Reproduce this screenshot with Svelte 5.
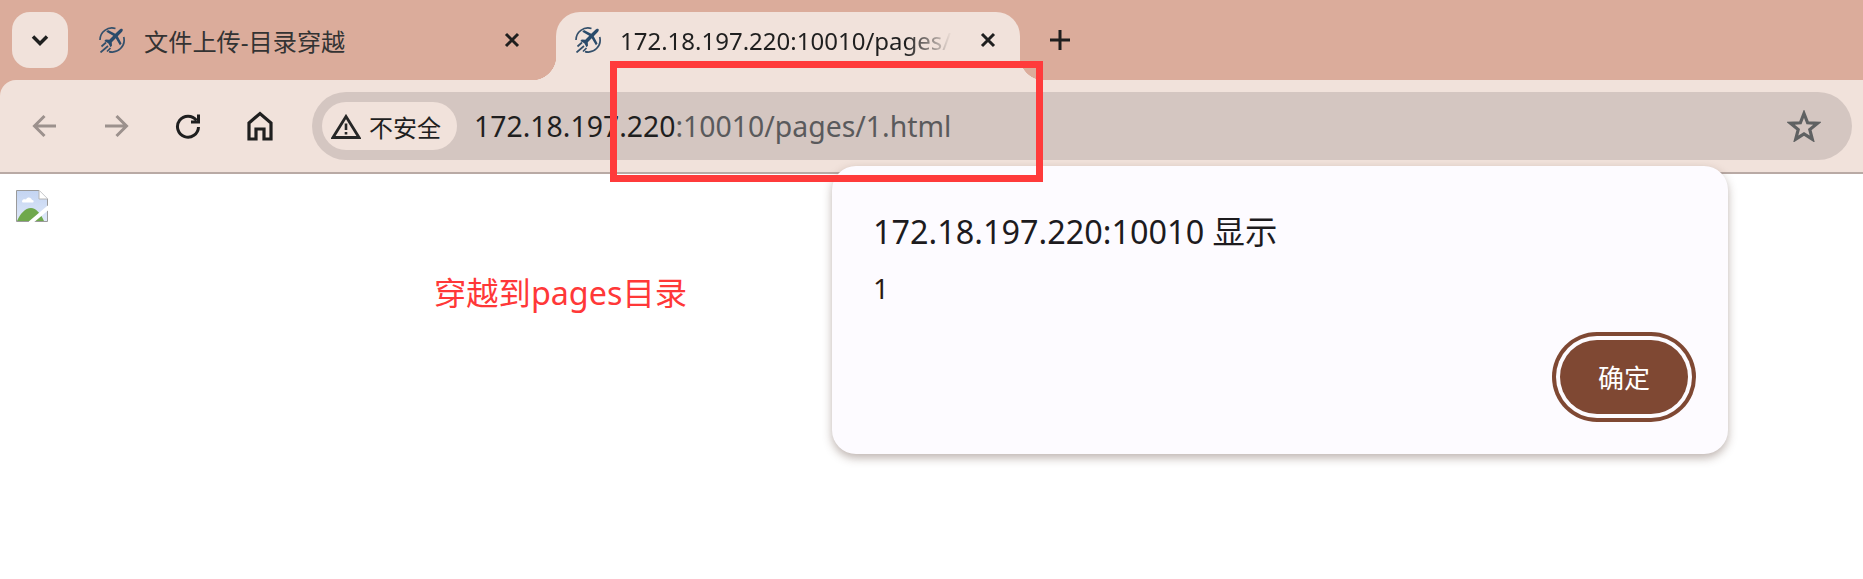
<script lang="ts">
  const host = '172.18.197.220';
  const rest = ':10010/pages/1.html';
</script>

{#snippet favicon()}
  <svg class="favicon" viewBox="0 0 28 26" aria-hidden="true">
    <path class="fav-ring" d="M2 13A12 12 0 0 1 17.500 1.500M25.700 10A12 12 0 0 1 11 24.600" />
    <path class="fav-speed" d="M8 15.500 3.500 19.500M10 19 2.500 25.500M12.500 21 9 24.500" />
    <path
      class="fav-plane"
      transform="translate(16.500 10) rotate(45) scale(.8)"
      d="M0-14C1.600-14 2.200-12 2.200-9.500V-3.500L12-.5V2.500L2.200 0V7L5.500 10V12.500L0 11-5.500 12.500V10L-2.200 7V0L-12 2.500V-.5L-2.200-3.500V-9.500C-2.200-12-1.600-14 0-14Z"
    />
  </svg>
{/snippet}

{#snippet closeIcon()}
  <svg class="close" viewBox="0 0 16 16" aria-hidden="true">
    <path d="M2 2 14 14M14 2 2 14" />
  </svg>
{/snippet}

<div class="browser">
  <div class="chrome">
    <div class="tabstrip">
      <button class="tab-search" aria-label="搜索标签页">
        <svg viewBox="0 0 18 12" aria-hidden="true"><path d="M2 2.500 9 9.500 16 2.500" /></svg>
      </button>
      <div class="tab">
        {@render favicon()}
        <span class="tab-title">文件上传-目录穿越</span>
        {@render closeIcon()}
      </div>
      <div class="tab active">
        {@render favicon()}
        <span class="tab-title fade">{host}{rest}</span>
        {@render closeIcon()}
      </div>
      <button class="new-tab" aria-label="新建标签页">
        <svg viewBox="0 0 22 22" aria-hidden="true"><path d="M11 1V21M1 11H21" /></svg>
      </button>
    </div>

    <div class="toolbar">
      <button class="nav dim" aria-label="后退">
        <svg class="back" viewBox="0 0 26 26" aria-hidden="true"><path d="M24 13H3M12.500 3 2.500 13 12.500 23" /></svg>
      </button>
      <button class="nav dim" aria-label="前进">
        <svg viewBox="0 0 26 26" aria-hidden="true"><path d="M2 13H23M13.500 3 23.500 13 13.500 23" /></svg>
      </button>
      <button class="nav" aria-label="重新加载">
        <svg class="reload" viewBox="0 0 26 26" aria-hidden="true">
          <path d="M21.500 7.500A10.500 10.500 0 1 0 23.500 14" />
          <path d="M23.500 1.500V9H16" />
        </svg>
      </button>
      <button class="nav" aria-label="主页">
        <svg class="home" viewBox="0 0 26 30" aria-hidden="true">
          <path d="M2 28V12L13 2.500 24 12V28H17V18H9V28Z" />
        </svg>
      </button>

      <div class="omnibox">
        <div class="chip">
          <svg class="warn" viewBox="0 0 30 25" aria-hidden="true">
            <path class="warn-outline" d="M15 2.500 28 23.500H2Z" />
            <path class="warn-mark" d="M15 9.500V16M15 18V20.500" />
          </svg>
          <span>不安全</span>
        </div>
        <div class="url"><span class="host">{host}</span><span class="path">{rest}</span></div>
        <svg class="star" viewBox="0 0 34 32" aria-hidden="true">
          <path d="M17 3.500 20.600 12.800 30.500 13.300 22.800 19.600 25.300 29.200 17 23.800 8.700 29.200 11.200 19.600 3.500 13.300 13.400 12.800Z" />
        </svg>
      </div>
    </div>
  </div>

  <div class="page">
    <svg class="broken" viewBox="0 0 32 32" aria-label="图片加载失败">
      <defs>
        <linearGradient id="sky" x1="0" y1="0" x2="0" y2="1">
          <stop offset="0" stop-color="#c3d4f2" />
          <stop offset="1" stop-color="#dfe8f8" />
        </linearGradient>
      </defs>
      <path d="M.5.5H23L31.500 9V31.500H.5Z" fill="url(#sky)" stroke="#9a9a9a" />
      <path d="M23 .5V9H31.500" fill="#fff" stroke="#b5b5b5" />
      <path d="M6 11.500C6 9 9 9 10 9.500 11.500 6.500 15 7 16 10 18 10 18 12 17 12.500H7C6.500 12.500 6 12 6 11.500Z" fill="#fff" />
      <path d="M1 31C4 24 9 18 15 18 20 18 25 24 28 31Z" fill="#6fa84c" />
      <path d="M14 33 33 17" stroke="#fff" stroke-width="4" fill="none" />
    </svg>

    <span class="note">穿越到pages目录</span>
  </div>

  <div class="callout"></div>

  <div class="dialog" role="alertdialog">
    <div class="dialog-title">172.18.197.220:10010 显示</div>
    <div class="dialog-body">1</div>
    <div class="dialog-actions">
      <button class="ok">确定</button>
    </div>
  </div>
</div>

<style>
  :global(body) {
    background: #fff;
  }

  .browser {
    position: relative;
    height: 579px;
    overflow: hidden;
    font-family: "Noto Sans", "Noto Sans CJK SC", sans-serif;
    color: #1f1f1f;
  }

  button {
    padding: 0;
    border: 0;
    background: none;
    font: inherit;
    display: flex;
    align-items: center;
    justify-content: center;
  }

  .chrome {
    background: #dbac9b;
  }

  /* tab strip */
  .tabstrip {
    display: flex;
    gap: 12px;
    height: 80px;
    padding-left: 12px;
  }
  .tab-search {
    width: 56px;
    height: 56px;
    margin-top: 12px;
    border-radius: 18px;
    background: #f1e2db;
  }
  .tab-search svg {
    width: 18px;
    height: 12px;
    fill: none;
    stroke: #1f1f1f;
    stroke-width: 3.500;
  }
  .tab {
    position: relative;
    display: flex;
    align-items: center;
    width: 464px;
    height: 56px;
    margin-top: 12px;
    padding: 0 24px 0 18px;
    box-sizing: border-box;
    font-size: 24.200px;
    color: #333;
  }
  .tab.active {
    height: 68px;
    padding-bottom: 12px;
    border-radius: 24px 24px 0 0;
    background: #f1e2db;
    font-size: 24px;
    color: #1f1f1f;
  }
  /* the concave corners where the active tab meets the toolbar */
  .tab.active::before,
  .tab.active::after {
    content: '';
    position: absolute;
    bottom: 0;
    width: 24px;
    height: 24px;
  }
  .tab.active::before {
    left: -24px;
    background: radial-gradient(circle at 0 0, transparent 24px, #f1e2db 24.500px);
  }
  .tab.active::after {
    right: -24px;
    background: radial-gradient(circle at 100% 0, transparent 24px, #f1e2db 24.500px);
  }
  .favicon {
    flex: none;
    width: 28px;
    height: 26px;
    margin-right: 18px;
  }
  .fav-ring,
  .fav-speed {
    fill: none;
    stroke: #34506b;
    stroke-width: 1.700;
  }
  .fav-plane {
    fill: #2a4b6b;
  }
  .tab-title {
    flex: 1;
    min-width: 0;
    margin-right: 28px;
    white-space: nowrap;
    overflow: hidden;
  }
  .tab-title.fade {
    -webkit-mask-image: linear-gradient(to right, #000 86%, transparent 100%);
    mask-image: linear-gradient(to right, #000 86%, transparent 100%);
  }
  .close {
    flex: none;
    width: 16px;
    height: 16px;
    fill: none;
    stroke: #1f1f1f;
    stroke-width: 3;
  }
  .new-tab {
    width: 22px;
    height: 22px;
    margin: 29px 0 0 17px;
  }
  .new-tab svg {
    width: 22px;
    height: 22px;
    fill: none;
    stroke: #1f1f1f;
    stroke-width: 3;
  }

  /* toolbar */
  .toolbar {
    display: flex;
    height: 80px;
    padding: 12px 11px 0 8px;
    border-radius: 16px 0 0 0;
    border-bottom: 2px solid #b9aaa5;
    background: #f1e2db;
  }
  .nav {
    width: 72px;
    height: 68px;
    flex: none;
  }
  .nav svg {
    width: 26px;
    height: 26px;
    fill: none;
    stroke: #1f1f1f;
    stroke-width: 3;
  }
  .nav.dim svg {
    stroke: #9c918d;
  }
  .nav .back {
    margin-left: 2px;
  }
  .nav .home {
    height: 30px;
    stroke-width: 3.200;
  }
  .omnibox {
    flex: 1;
    display: flex;
    align-items: center;
    height: 68px;
    margin-left: 16px;
    padding: 0 31px 0 10px;
    border-radius: 34px;
    background: #d4c6c1;
  }
  .chip {
    display: flex;
    align-items: center;
    gap: 8px;
    height: 48px;
    padding: 0 16px 0 9px;
    border-radius: 24px;
    background: #f1e2db;
    font-size: 24px;
  }
  .warn {
    width: 30px;
    height: 25px;
    fill: none;
    stroke: #262626;
  }
  .warn-outline {
    stroke-width: 2.800;
  }
  .warn-mark {
    stroke-width: 2.600;
  }
  .url {
    margin-left: 17px;
    font-size: 28.400px;
    white-space: nowrap;
  }
  .host {
    color: #1f1f1f;
  }
  .path {
    color: #5a5a5c;
  }
  .star {
    width: 34px;
    height: 32px;
    margin-left: auto;
    fill: none;
    stroke: #5f6162;
    stroke-width: 3.200;
  }

  /* page */
  .page {
    position: relative;
    padding: 16px;
  }
  .broken {
    display: block;
    width: 32px;
    height: 32px;
  }
  .note {
    position: absolute;
    left: 434px;
    top: 96px;
    font-size: 32.300px;
    line-height: 44px;
    color: #ff3838;
    white-space: nowrap;
  }

  /* red annotation box drawn over the screenshot */
  .callout {
    position: absolute;
    left: 610px;
    top: 61px;
    width: 433px;
    height: 121px;
    box-sizing: border-box;
    border: 7px solid #ff3b3b;
    z-index: 2;
  }

  /* alert dialog */
  .dialog {
    position: absolute;
    left: 832px;
    top: 166px;
    width: 896px;
    height: 288px;
    box-sizing: border-box;
    padding: 44px 32px 32px 41px;
    border-radius: 24px;
    background: #fdfbff;
    box-shadow: 0 4px 10px rgba(70, 40, 30, 0.35);
    z-index: 1;
  }
  .dialog-title {
    font-size: 32.400px;
    line-height: 42px;
    color: #1d1b1e;
  }
  .dialog-body {
    margin-top: 18px;
    font-size: 28px;
    line-height: 36px;
    color: #2b1a12;
  }
  .dialog-actions {
    display: flex;
    justify-content: flex-end;
    margin-top: 26px;
  }
  .ok {
    width: 128px;
    height: 74px;
    margin: 8px;
    border-radius: 37px;
    background: #7f4833;
    color: #fff;
    font-size: 26px;
    box-shadow: 0 0 0 4px #fdfbff, 0 0 0 8px #7f4833;
  }
</style>
